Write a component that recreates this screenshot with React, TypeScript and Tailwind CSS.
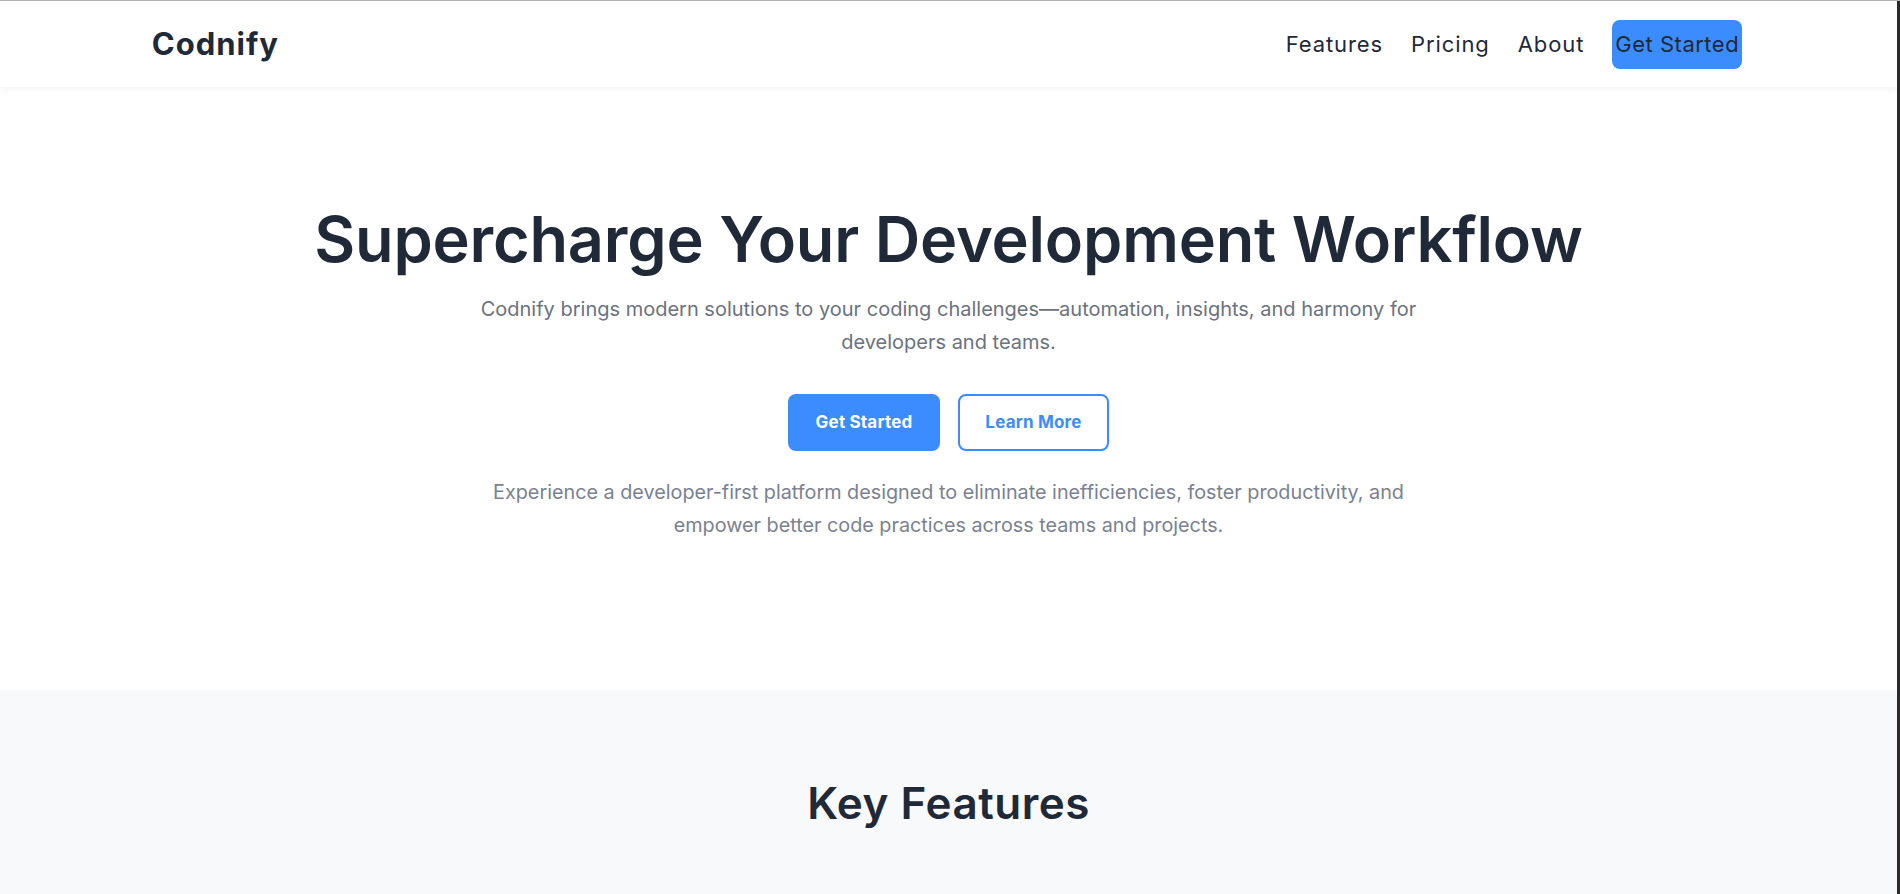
const font = "font-['Inter','Noto_Sans',sans-serif]";

function NavLink({ label }: { label: string }) {
    return <a href="#" className="text-[22px] text-[#1f2937] tracking-[0.9px]">{label}</a>
}

export default function App(){
    return (
        <div className={`${font} min-h-screen flex border-t border-[#b5b5b5] bg-white`}>
            <div className="flex-1 min-w-0 flex flex-col">
                <header className="h-[86px] pl-[8%] pr-[calc(8%+3px)] flex items-center justify-between bg-white shadow-[0_2px_8px_rgba(0,0,0,0.05)] relative z-10">
                    <span className="text-[31px] font-bold text-[#1f2937] tracking-[1px]">Codnify</span>
                    <nav className="flex items-center gap-[28px]">
                        <NavLink label="Features"/>
                        <NavLink label="Pricing"/>
                        <NavLink label="About"/>
                        <a href="#" className="h-[49px] w-[130px] flex items-center justify-center rounded-[8px] bg-[#3b8cff] text-[22px] tracking-[0.5px] text-[#1f2937] whitespace-nowrap">Get Started</a>
                    </nav>
                </header>

                <section className="pt-[116px] pb-[148px] flex flex-col items-center text-center">
                    <h1 className="text-[63px] leading-[72px] font-semibold text-[#1f2937] tracking-[-0.2px]">Supercharge Your Development Workflow</h1>
                    <p className="mt-[18px] max-w-[960px] text-[20px] leading-[33px] text-[#6b7280]">
                        Codnify brings modern solutions to your coding challenges—automation, insights, and harmony for developers and teams.
                    </p>
                    <div className="mt-[35px] flex gap-[18px]">
                        <button className="w-[152px] h-[57px] rounded-[8px] bg-[#3b8cff] text-white text-[17px] font-bold tracking-[0.2px]">Get Started</button>
                        <button className="w-[151px] h-[57px] rounded-[8px] border-2 border-[#3b8cff] bg-white text-[#3b8cff] text-[17px] font-bold tracking-[0.2px]">Learn More</button>
                    </div>
                    <p className="mt-[25px] max-w-[960px] text-[19.8px] leading-[33px] text-[#7a8190]">
                        Experience a developer-first platform designed to eliminate inefficiencies, foster productivity, and empower better code practices across teams and projects.
                    </p>
                </section>

                <section className="flex-1 bg-[#f8f9fb] pt-[89px] flex flex-col items-center">
                    <h2 className="text-[44px] leading-[48px] font-semibold text-[#1f2937] tracking-[0.5px]">Key Features</h2>
                </section>
            </div>
            <div className="w-[3px] bg-[#2b2b2b]"/>
        </div>
    )
}
